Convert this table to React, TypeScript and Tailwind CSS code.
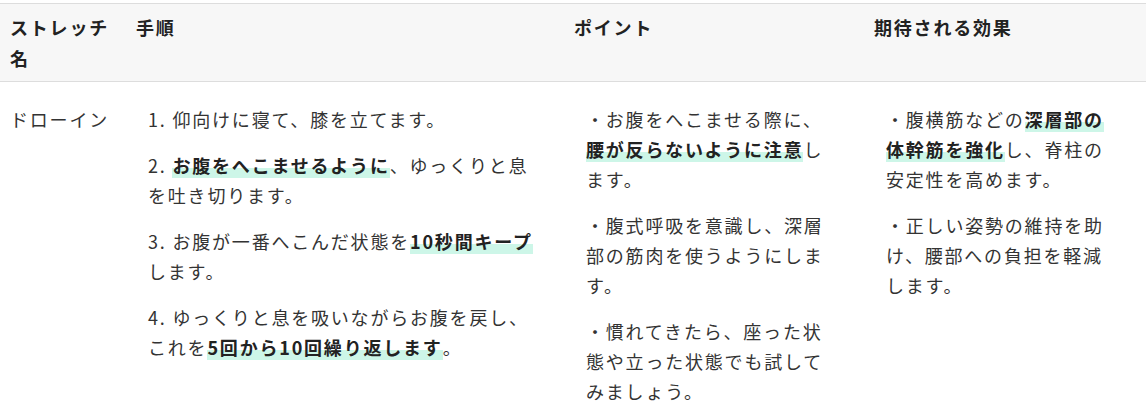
const Mark = ({ children }: { children: React.ReactNode }) => (
  <strong className="font-bold text-[#222] bg-[linear-gradient(transparent_60%,#cdf6e8_60%)]">
    {children}
  </strong>
);

export default function App() {
  return (
    <div className="w-[1146px] h-[413px] bg-white pt-[3px] overflow-hidden font-['Noto_Sans_CJK_JP',sans-serif] text-[18px] tracking-[0.1em] text-[#333]">
      <table className="w-full table-fixed border-collapse">
        <colgroup>
          <col className="w-[126px]" />
          <col className="w-[438px]" />
          <col className="w-[300px]" />
          <col className="w-[282px]" />
        </colgroup>
        <thead>
          <tr className="bg-[#f7f7f7] border-y border-[#dddddd]">
            <th className="text-left align-top font-bold text-[#222] leading-[31px] pl-[10px] pr-[10px] pt-[8px] pb-[7px]">
              ストレッチ名
            </th>
            <th className="text-left align-top font-bold text-[#222] leading-[31px] pl-[10px] pr-[10px] pt-[8px] pb-[7px]">
              手順
            </th>
            <th className="text-left align-top font-bold text-[#222] leading-[31px] pl-[10px] pr-[10px] pt-[8px] pb-[7px]">
              ポイント
            </th>
            <th className="text-left align-top font-bold text-[#222] leading-[31px] pl-[10px] pr-[10px] pt-[8px] pb-[7px]">
              期待される効果
            </th>
          </tr>
        </thead>
        <tbody className="leading-[30px]">
          <tr>
            <td className="align-top pl-[10px] pr-[10px] pt-[22px]">ドローイン</td>
            <td className="align-top pl-[22px] pr-[24px] pt-[22px]">
              <div className="flex flex-col gap-4">
                <p>1. 仰向けに寝て、膝を立てます。</p>
                <p>
                  2. <Mark>お腹をへこませるように</Mark>、ゆっくりと息を吐き切ります。
                </p>
                <p>
                  3. お腹が一番へこんだ状態を<Mark>10秒間キープ</Mark>します。
                </p>
                <p>
                  4. ゆっくりと息を吸いながらお腹を戻し、これを<Mark>5回から10回繰り返します</Mark>。
                </p>
              </div>
            </td>
            <td className="align-top pl-[22px] pr-[24px] pt-[22px]">
              <div className="flex flex-col gap-4">
                <p>
                  ・お腹をへこませる際に、<Mark>腰が反らないように注意</Mark>します。
                </p>
                <p>・腹式呼吸を意識し、深層部の筋肉を使うようにします。</p>
                <p>・慣れてきたら、座った状態や立った状態でも試してみましょう。</p>
              </div>
            </td>
            <td className="align-top pl-[22px] pr-[24px] pt-[22px]">
              <div className="flex flex-col gap-4">
                <p>
                  ・腹横筋などの<Mark>深層部の体幹筋を強化</Mark>し、脊柱の安定性を高めます。
                </p>
                <p>・正しい姿勢の維持を助け、腰部への負担を軽減します。</p>
              </div>
            </td>
          </tr>
        </tbody>
      </table>
    </div>
  );
}
